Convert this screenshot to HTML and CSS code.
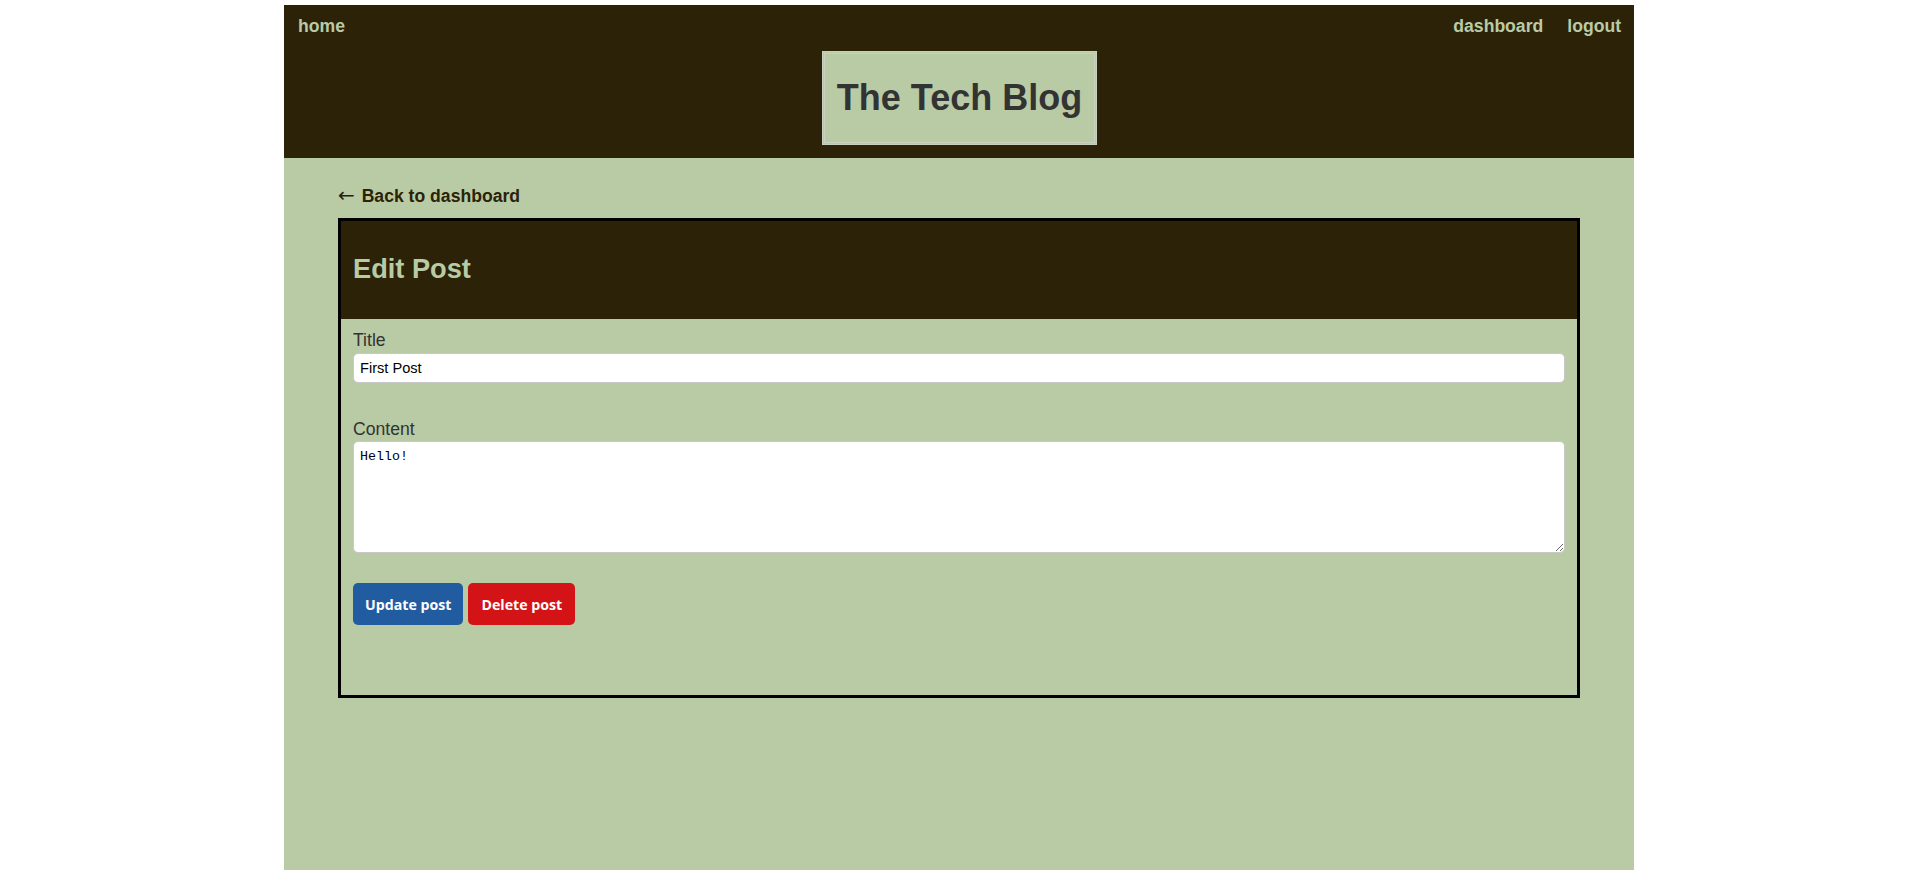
FILE: index.html
```html
<!DOCTYPE html>
<html lang="en">
<head>
<meta charset="utf-8">
<title>The Tech Blog</title>
<link rel="stylesheet" href="styles.css">
</head>
<body>
<div class="page">
  <header class="site-header">
    <nav class="nav">
      <a class="nav-link" href="#">home</a>
      <div class="nav-right">
        <a class="nav-link" href="#">dashboard</a>
        <a class="nav-link" href="#">logout</a>
      </div>
    </nav>
    <div class="brand-wrap">
      <h1 class="brand">The Tech Blog</h1>
    </div>
  </header>
  <main class="main">
    <a class="back-link" href="#"><span class="arrow">←</span> Back to dashboard</a>
    <section class="card">
      <div class="card-header">
        <h2 class="card-title">Edit Post</h2>
      </div>
      <form class="card-body">
        <label class="field-label" for="title">Title</label>
        <input class="text-input" id="title" type="text" value="First Post">
        <label class="field-label field-label-gap" for="content">Content</label>
        <textarea class="text-area" id="content">Hello!</textarea>
        <div class="actions">
          <button class="btn btn-update" type="button">Update post</button>
          <button class="btn btn-delete" type="button">Delete post</button>
        </div>
      </form>
    </section>
  </main>
</div>
</body>
</html>
```

FILE: styles.css
```css
html, body {
  margin: 0;
  padding: 0;
  background: #ffffff;
}

body {
  font-family: "Liberation Sans", Arial, sans-serif;
}

.page {
  width: 1350px;
  margin: 5px auto 0;
  min-height: 865px;
  background: #b9cba5;
  display: flex;
  flex-direction: column;
}

.site-header {
  background: #2c2208;
  padding: 11px 13px 13px 14px;
}

.nav {
  display: flex;
  justify-content: space-between;
  align-items: center;
}

.nav-right {
  display: flex;
  gap: 24px;
}

.nav-link {
  color: #b9cba5;
  font-weight: 700;
  font-size: 17.6px;
  text-decoration: none;
}

.brand-wrap {
  display: flex;
  justify-content: center;
  margin-top: 14px;
}

.brand {
  margin: 0;
  padding: 23px 12px;
  background: #b9cba5;
  border: 3px double #c9d0c0;
  color: #333333;
  font-size: 36px;
  font-weight: 700;
  line-height: normal;
}

.main {
  padding: 27px 54px 0;
  display: flex;
  flex-direction: column;
  align-items: flex-start;
}

.back-link {
  color: #2c2208;
  font-weight: 700;
  font-size: 17.6px;
  line-height: 20px;
  text-decoration: none;
}

.arrow {
  font-weight: 400;
  font-family: "DejaVu Sans", sans-serif;
  font-size: 20px;
  line-height: 20px;
  margin-right: 2px;
}

.card {
  margin-top: 12px;
  align-self: stretch;
  border: 3px solid #000000;
}

.card-header {
  background: #2c2208;
  padding: 32px 12px 34px;
}

.card-title {
  margin: 0;
  color: #b9cba5;
  font-size: 27.2px;
  font-weight: 700;
  line-height: normal;
}

.card-body {
  display: flex;
  flex-direction: column;
  padding: 11px 12px 70px;
}

.field-label {
  color: #333333;
  font-size: 17.6px;
  margin-bottom: 2px;
}

.field-label-gap {
  margin-top: 36px;
  margin-bottom: 1px;
}

.text-input {
  box-sizing: border-box;
  height: 30px;
  padding: 0 6px;
  border: 1px solid #c8c8c8;
  border-radius: 5px;
  background: #ffffff;
  font-family: "Liberation Sans", Arial, sans-serif;
  font-size: 14.6px;
  color: #000000;
  outline: none;
}

.text-area {
  box-sizing: border-box;
  height: 112px;
  padding: 7px 6px;
  border: 1px solid #c8c8c8;
  border-radius: 5px;
  background: #ffffff;
  font-family: "Liberation Mono", monospace;
  font-size: 13.33px;
  color: #000000;
  outline: none;
}

.actions {
  display: flex;
  gap: 5px;
  margin-top: 30px;
}

.btn {
  height: 42px;
  padding: 0 12px;
  border: none;
  border-radius: 5px;
  color: #ffffff;
  font-family: "Open Sans", sans-serif;
  font-weight: 700;
  font-size: 14.2px;
  cursor: pointer;
}

.btn-update {
  background: #225ca0;
}

.btn-delete {
  background: #d41316;
  padding: 0 13px;
}
```
